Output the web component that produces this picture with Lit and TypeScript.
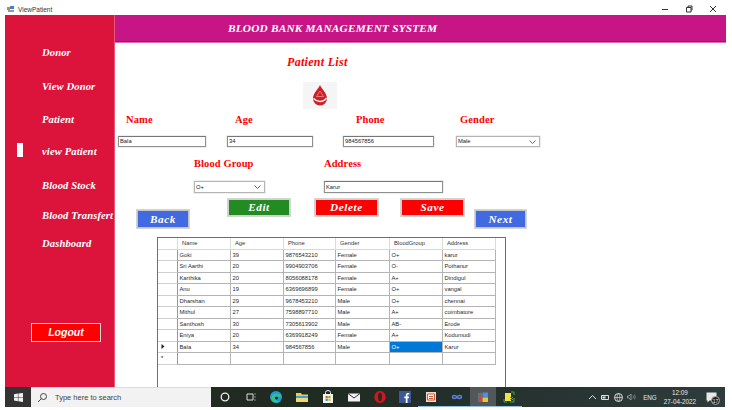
import { LitElement, html, css, svg } from 'lit';
import { customElement } from 'lit/decorators.js';

const NAV = [
  { label: 'Donor', h: 34 },
  { label: 'View Donor', h: 33 },
  { label: 'Patient', h: 32 },
  { label: 'view Patient', h: 34 },
  { label: 'Blood Stock', h: 30 },
  { label: 'Blood Transfert', h: 28 },
  { label: 'Dashboard', h: 29 },
];

const COLS = ['Name', 'Age', 'Phone', 'Gender', 'BloodGroup', 'Address'];
const ROWS = [
  ['Goki', '39', '9876543210', 'Female', 'O+', 'karur'],
  ['Sri Aarthi', '20', '9904903706', 'Female', 'O-', 'Pothanur'],
  ['Karthika', '20', '8056088178', 'Female', 'A+', 'Dindigul'],
  ['Anu', '19', '6369696899', 'Female', 'O+', 'vangal'],
  ['Dharshan', '29', '9678453210', 'Male', 'O+', 'chennai'],
  ['Mithul', '27', '7598897710', 'Male', 'A+', 'coimbatore'],
  ['Santhosh', '30', '7305613902', 'Male', 'AB-', 'Erode'],
  ['Eniya', '20', '6369918249', 'Female', 'A+', 'Kodumudi'],
  ['Bala', '34', '984567856', 'Male', 'O+', 'Karur'],
];

const chevron = svg`<svg class="chev" width="7" height="4" viewBox="0 0 7 4"><path d="M.5.5 3.5 3.5 6.5.5" fill="none" stroke="#666"/></svg>`;

@customElement('app-root')
export class AppRoot extends LitElement {
  static styles = css`
    :host {
      display: block;
      width: 732px;
      height: 410px;
      overflow: hidden;
      background: #fff;
      font-family: 'Liberation Sans', Arial, sans-serif;
    }

    .titlebar {
      height: 15px;
      display: flex;
      align-items: center;
      padding: 3px 0 0 7px;
      box-sizing: border-box;
      font-size: 6.5px;
      color: #333;
      gap: 3px;
    }
    .titlebar .spacer { flex: 1; }
    .winbtns { display: flex; align-items: center; gap: 16px; padding-right: 15px; }

    .window {
      height: 372px;
      margin: 0 6px 0 5px;
      display: flex;
    }

    .serif {
      font-family: 'Liberation Serif', 'Times New Roman', serif;
      font-weight: bold;
    }

    .sidebar {
      width: 109px;
      flex: none;
      background: #dc143c;
      border-right: 1px solid #e8587a;
      display: flex;
      flex-direction: column;
      padding-top: 31px;
      color: #fff;
      position: relative;
    }
    .nav {
      padding-left: 37px;
      font-size: 10.6px;
      font-style: italic;
      letter-spacing: 0.12px;
      line-height: 14px;
      white-space: nowrap;
    }
    .marker {
      position: absolute;
      left: 12px;
      top: 128px;
      width: 6px;
      height: 14px;
      background: #fff;
    }
    .logout {
      margin: 57px 0 0 26px;
      width: 70px;
      height: 19px;
      box-sizing: border-box;
      background: #f00;
      border: 1px solid #ddd;
      color: #fff;
      font: italic bold 10.5px 'Liberation Sans', Arial, sans-serif;
      text-align: center;
      line-height: 17px;
    }

    .main { flex: 1; min-width: 0; display: flex; flex-direction: column; }

    .banner {
      height: 27px;
      flex: none;
      box-sizing: border-box;
      background: #c71585;
      border-bottom: 1px solid #b0096f;
      box-shadow: 0 1px 0 #e070b4;
      color: #fff;
      font-size: 11.3px;
      font-style: italic;
      letter-spacing: 0.2px;
      line-height: 26px;
      padding-left: 113px;
      white-space: nowrap;
    }

    .form { flex: 1; display: flex; flex-direction: column; }
    .red { color: #f00; }

    .heading {
      margin: 13px 0 0 172px;
      font-size: 12px;
      font-style: italic;
      letter-spacing: 0.3px;
      line-height: 14px;
    }
    .logo {
      margin: 13px 0 0 188px;
      width: 34px;
      height: 27px;
      background: #f5f5f5;
      display: flex;
      align-items: center;
      justify-content: center;
    }

    .row { display: flex; white-space: nowrap; }
    .lbl { font-size: 10.5px; letter-spacing: 0.1px; line-height: 14px; }

    .labels1 { margin-top: 4px; }
    .inputs1 { margin-top: 9px; padding-left: 3px; }
    .labels2 { margin-top: 10px; }
    .inputs2 { margin-top: 10px; padding-left: 79px; }
    .inputs2 .field { height: 12px; }

    .field {
      height: 11px;
      box-sizing: border-box;
      border: 1px solid #8f8f8f;
      border-top-color: #777;
      background: #fff;
      box-shadow: 0 0 0 .5px #ddd;
      font-size: 5.8px;
      line-height: 9px;
      padding-left: 1px;
      color: #222;
      display: flex;
      justify-content: space-between;
      align-items: center;
    }
    .combo { border-color: #b4b4b4; padding-right: 3px; }

    .buttons { margin-top: 6px; align-items: flex-start; padding-left: 22px; }
    .btn {
      box-sizing: border-box;
      border: 1px solid #cfcfcf;
      outline: 1px solid #d4d4d4;
      color: #fff;
      font-size: 11.2px;
      font-style: italic;
      letter-spacing: 0.6px;
      text-align: center;
    }
    .btn.tall { height: 17px; line-height: 15px; background: #f00; }
    .btn.blue { height: 18px; line-height: 16px; background: #4169e1; margin-top: 11px; border-color: #c4c4c4; }
    .btn.green { background: #228b22; }

    .grid-frame {
      margin: 9px 0 0 42px;
      width: 349px;
      flex: 1;
      box-sizing: border-box;
      border: 1px solid #6e6e6e;
      border-bottom: none;
      background: #fff;
    }
    .grid {
      width: 338px;
      display: grid;
      grid-template-columns: 20px 53px 53px 52px 54px 53px 53px;
      grid-auto-rows: 11.5px;
      font-size: 5.8px;
      color: #2a2a2a;
    }
    .cell {
      border-right: 1px solid #b4b4b4;
      border-bottom: 1px solid #b4b4b4;
      padding-left: 1.5px;
      line-height: 10.5px;
      white-space: nowrap;
      overflow: hidden;
      box-sizing: border-box;
    }
    .cell.head { border-bottom-color: #d8d8d8; border-right-color: #dcdcdc; padding-left: 4px; color: #333; }
    .cell.rh {
      padding-left: 3px;
      border-right-color: #999;
      border-bottom-color: #d0d0d0;
      color: #000;
      display: flex;
      align-items: center;
    }
    .cell.sel { background: #0078d7; color: #fff; }

    .taskbar {
      height: 20px;
      margin: 0 7px 0 5px;
      display: flex;
      align-items: stretch;
      background: linear-gradient(90deg, #2b2b28 0%, #1f2a20 40%, #232f2a 62%, #2d3c3c 100%);
      color: #e6e6e6;
    }
    .start {
      width: 26px;
      flex: none;
      background: #333;
      display: flex;
      align-items: center;
      justify-content: center;
    }
    .search {
      width: 180px;
      flex: none;
      box-sizing: border-box;
      background: #f2f2f2;
      border-top: 1px solid #ddd;
      color: #444;
      display: flex;
      align-items: center;
      gap: 7px;
      padding-left: 6px;
      font-size: 7.5px;
    }
    .tasks { display: flex; align-items: stretch; padding-left: 1px; }
    .task {
      width: 25.8px;
      box-sizing: border-box;
      display: flex;
      align-items: center;
      justify-content: center;
    }
    .task.open { border-bottom: 1.5px solid #8fbfdc; }
    .task.active { background: #52585a; }
    .tray {
      margin-left: auto;
      display: flex;
      align-items: center;
      padding-right: 7px;
      gap: 4px;
      font-size: 6.3px;
    }
    .eng { margin-left: 3px; }
    .clock { text-align: center; line-height: 9px; margin: 0 6px 0 3px; }
    .notif { position: relative; display: flex; }
    .badge {
      position: absolute;
      right: -2px;
      bottom: -2px;
      width: 9px;
      height: 9px;
      border-radius: 50%;
      background: #222;
      border: .5px solid #aaa;
      font-size: 5px;
      line-height: 9px;
      text-align: center;
      box-sizing: border-box;
    }
  `;

  private field(text: string, w: number, ml: number, combo = false) {
    return html`<div class="field ${combo ? 'combo' : ''}" style="width:${w}px;margin-left:${ml}px">
      <span>${text}</span>${combo ? chevron : ''}
    </div>`;
  }

  private label(text: string, w: number, ml: number) {
    return html`<span class="lbl serif red" style="width:${w}px;margin-left:${ml}px">${text}</span>`;
  }

  private taskIcons() {
    const icons = [
      // edge
      svg`<circle cx="7" cy="7" r="6" fill="#1b9de2"/><path d="M2 8c1-5 9-6 11-1-2-1-6-1-6 2 0 2 2 3 5 2-3 3-9 2-10-3z" fill="#35c28a"/><circle cx="7.5" cy="8" r="1.6" fill="#12303f"/>`,
      // explorer
      svg`<path d="M1 3h5l1 1.500h6V12H1z" fill="#f6c83d"/><path d="M1 6h12v2H1z" fill="#3aa0dc"/><path d="M1 8h12v4H1z" fill="#f2d777"/>`,
      // store
      svg`<path d="M2 4h10v9H2z" fill="#f4f4f4"/><path d="M4.500 4V2.500a2.500 2 0 0 1 5 0V4" fill="none" stroke="#eee"/><path d="M4.600 6h2.200v2.200H4.600z" fill="#f25022"/><path d="M7.300 6h2.200v2.200H7.300z" fill="#7fba00"/><path d="M4.600 8.700h2.200v2.200H4.600z" fill="#00a4ef"/><path d="M7.300 8.700h2.200v2.200H7.300z" fill="#ffb900"/>`,
      // mail
      svg`<path d="M1 3.500h12v8H1z" fill="#f2f2f2"/><path d="M1 3.500 7 8l6-4.500" fill="none" stroke="#333"/>`,
      // opera
      svg`<path fill-rule="evenodd" d="M7 1a5.600 6 0 1 0 .01 0zM7 2.600c1.300 0 2 2 2 4.400s-.7 4.400-2 4.400-2-2-2-4.400.7-4.400 2-4.400z" fill="#d9141e"/>`,
      // facebook
      svg`<path d="M1 1h12v12H1z" fill="#3b5998"/><path d="M9.500 13V8.300h1.400l.3-1.800H9.500V5.400c0-.6.2-.9.9-.9h.9V3c-1.900-.3-3.500 0-3.500 2.200v1.300H6.300v1.800h1.500V13z" fill="#fff"/>`,
      // office style tile
      svg`<path d="M2 2h10v10H2z" fill="#f3d9cf"/><path d="M3.500 4h7v6h-7z" fill="#fff" stroke="#d2552f"/><path d="M5 6h4v1H5zM5 8h4v1H5z" fill="#d2552f"/>`,
      // infinity
      svg`<path d="M7 7C5.500 4.800 2.500 5 2.500 7S5.500 9.200 7 7s4.500-2 4.500 0S8.500 9.200 7 7z" fill="none" stroke="#5c7fd6" stroke-width="1.500"/>`,
      // active app
      svg`<path d="M2 3h4v9H2z" fill="#6d7275"/><path d="M3 5h2v2H3z" fill="#d43c3c"/><path d="M3 8h2v3H3z" fill="#c94040"/><path d="M6.500 2.500h5.500v5H6.500z" fill="#4a90d9"/><path d="M6.500 7.500h5.500v4.500H6.500z" fill="#f2c12e"/>`,
      // last app
      svg`<path d="M3 3h6v8H3z" fill="#f2e33a"/><path d="M9 2h3v3M2 9v3h3M12 8v4H8" fill="none" stroke="#3aa55c"/><path d="M8 7l3 3M11 7l-3 3" stroke="#4a90d9"/>`,
    ];
    return icons.map(
      (s, i) => html`<div class="task ${i >= 6 ? 'open' : ''} ${i === 8 ? 'active' : ''}">
        <svg width="14" height="14" viewBox="0 0 14 14">${s}</svg>
      </div>`
    );
  }

  render() {
    return html`
      <div class="titlebar">
        <svg width="8" height="8" viewBox="0 0 8 8">
          <path d="M0 2h3v3H0z" fill="#d08a2e" /><path d="M3 1h4v3H3z" fill="#4a7fc4" /><path d="M1 5h6v2H1z" fill="#8a9bb0" />
        </svg>
        <span>ViewPatient</span>
        <span class="spacer"></span>
        <div class="winbtns">
          <svg width="8" height="8" viewBox="0 0 8 8"><path d="M1 4.500h6" stroke="#333" fill="none" /></svg>
          <svg width="8" height="8" viewBox="0 0 8 8"><path d="M1.500 2.500h4.500v4.500H1.500zM3 2.500V1h4v4H6" stroke="#333" fill="none" /></svg>
          <svg width="8" height="8" viewBox="0 0 8 8"><path d="M1 1l6 6M7 1 1 7" stroke="#333" fill="none" /></svg>
        </div>
      </div>

      <div class="window">
        <nav class="sidebar serif">
          ${NAV.map((n) => html`<div class="nav" style="height:${n.h}px">${n.label}</div>`)}
          <span class="marker"></span>
          <div class="logout">Logout</div>
        </nav>
        <div class="main">
          <div class="banner serif">BLOOD BANK MANAGEMENT SYSTEM</div>
          <div class="form">
            <div class="heading serif red">Patient List</div>
            <div class="logo">
              <svg width="20" height="23" viewBox="0 0 20 23">
                <path d="M10 1C8.500 5 3 9 3 14.500a7 7 0 0 0 14 0C17 9 11.500 5 10 1z" fill="#cc1f28" />
                <path d="M3.500 14.500c2 2 3.500 3 6.500 3s5-1.500 6.500-3.500" fill="none" stroke="#f5f5f5" stroke-width="1.500" />
                <path d="M10 7 6.500 12.500h7z" fill="none" stroke="#ee9ea2" stroke-width=".7" />
              </svg>
            </div>
            <div class="row labels1">
              ${this.label('Name', 109, 11)}${this.label('Age', 121, 0)}${this.label('Phone', 104, 0)}${this.label('Gender', 60, 0)}
            </div>
            <div class="row inputs1">
              ${this.field('Bala', 88, 0)}${this.field('34', 86, 21)}${this.field('984567856', 91, 30)}${this.field('Male', 84, 22, true)}
            </div>
            <div class="row labels2">
              ${this.label('Blood Group', 130, 79)}${this.label('Address', 80, 0)}
            </div>
            <div class="row inputs2">
              ${this.field('O+', 71, 0, true)}${this.field('Karur', 119, 59)}
            </div>
            <div class="row buttons">
              <div class="btn blue serif" style="width:52px">Back</div>
              <div class="btn tall green serif" style="width:62px;margin-left:39px">Edit</div>
              <div class="btn tall serif" style="width:63px;margin-left:25px">Delete</div>
              <div class="btn tall serif" style="width:63px;margin-left:23px">Save</div>
              <div class="btn blue serif" style="width:51px;margin-left:11px">Next</div>
            </div>
            <div class="grid-frame">
              <div class="grid">
                <div class="cell head"></div>
                ${COLS.map((c) => html`<div class="cell head">${c}</div>`)}
                ${ROWS.map(
                  (r, i) => html`
                    <div class="cell rh">
                      ${i === ROWS.length - 1
                        ? html`<svg width="4" height="5" viewBox="0 0 4 5"><path d="M.5 0 3.500 2.500.5 5z" fill="#222" /></svg>`
                        : ''}
                    </div>
                    ${r.map(
                      (v, j) => html`<div class="cell ${i === ROWS.length - 1 && j === 4 ? 'sel' : ''}">${v}</div>`
                    )}
                  `
                )}
                <div class="cell rh">*</div>
                ${COLS.map(() => html`<div class="cell"></div>`)}
              </div>
            </div>
          </div>
        </div>
      </div>

      <div class="taskbar">
        <div class="start">
          <svg width="9" height="9" viewBox="0 0 9 9"><path d="M0 1.200 3.900.6v3.500H0zM4.400.5 9 0v4.100H4.400zM0 4.600h3.900v3.600L0 7.600zM4.400 4.600H9V9l-4.600-.7z" fill="#f0f0f0" /></svg>
        </div>
        <div class="search">
          <svg width="11" height="11" viewBox="0 0 11 11"><circle cx="6.500" cy="4.500" r="3" fill="none" stroke="#444" /><path d="M4.300 6.700 1 10" stroke="#444" fill="none" /></svg>
          <span>Type here to search</span>
        </div>
        <div class="tasks">
          <div class="task"><svg width="12" height="12" viewBox="0 0 12 12"><circle cx="6" cy="6" r="3.800" fill="none" stroke="#eee" stroke-width="1.300" /></svg></div>
          <div class="task"><svg width="12" height="12" viewBox="0 0 12 12"><path d="M2 3h6v6H2zM9.500 3h1M9.500 6h1M9.500 9h1" fill="none" stroke="#ddd" /></svg></div>
          ${this.taskIcons()}
        </div>
        <div class="tray">
          <svg width="9" height="6" viewBox="0 0 9 6"><path d="M1 5l3.500-3.500L8 5" fill="none" stroke="#ddd" /></svg>
          <svg width="9" height="7" viewBox="0 0 9 7"><path d="M.5 1.500h7v4h-7z" fill="none" stroke="#ddd" /><path d="M1.500 2.500h3v2h-3z" fill="#ddd" /></svg>
          <svg width="9" height="9" viewBox="0 0 9 9"><circle cx="4.500" cy="4.500" r="4" fill="none" stroke="#ddd" /><path d="M.5 4.500h8M4.500.5c-2 2.500-2 5.500 0 8M4.500.5c2 2.500 2 5.500 0 8" fill="none" stroke="#ddd" stroke-width=".7" /></svg>
          <svg width="9" height="8" viewBox="0 0 9 8"><path d="M.5 3v2h1.500l2 2V1L2 3z" fill="none" stroke="#bbb" stroke-width=".7" /><path d="M6 2.500q1 1.500 0 3M7.500 1.500q1.500 2.500 0 5" fill="none" stroke="#999" stroke-width=".7" /></svg>
          <span class="eng">ENG</span>
          <div class="clock">12:09<br />27-04-2022</div>
          <div class="notif">
            <svg width="12" height="11" viewBox="0 0 12 11"><path d="M.5.500h10v8h-7l-2 2v-2h-1z" fill="#e8e8e8" /></svg>
            <span class="badge">17</span>
          </div>
        </div>
      </div>
    `;
  }
}
